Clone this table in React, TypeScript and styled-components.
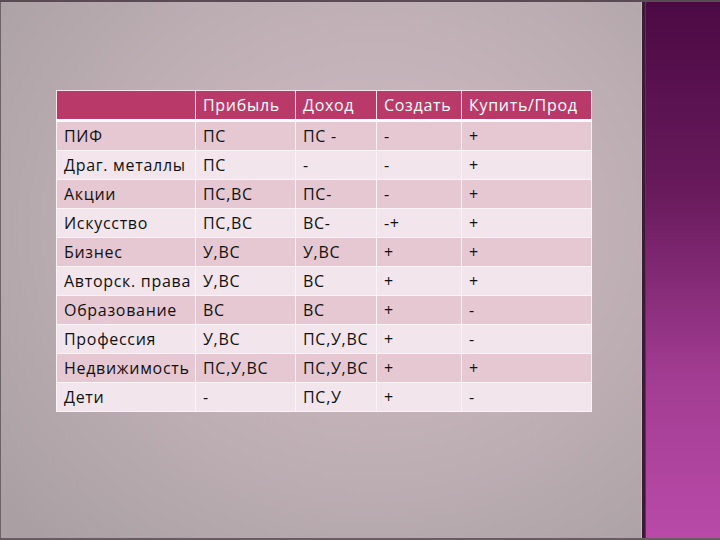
import React from 'react';
import styled, { createGlobalStyle } from 'styled-components';

const GlobalStyle = createGlobalStyle`
  html, body {
    margin: 0;
    padding: 0;
    width: 720px;
    height: 540px;
    overflow: hidden;
  }
  body {
    font-family: 'Open Sans', 'DejaVu Sans', sans-serif;
  }
`;

const columns = ['', 'Прибыль', 'Доход', 'Создать', 'Купить/Прод'];
const widths = [139, 100, 81, 85, 130];

const rows: string[][] = [
  ['ПИФ', 'ПС', 'ПС -', '-', '+'],
  ['Драг. металлы', 'ПС', '-', '-', '+'],
  ['Акции', 'ПС,ВС', 'ПС-', '-', '+'],
  ['Искусство', 'ПС,ВС', 'ВС-', '-+', '+'],
  ['Бизнес', 'У,ВС', 'У,ВС', '+', '+'],
  ['Авторск. права', 'У,ВС', 'ВС', '+', '+'],
  ['Образование', 'ВС', 'ВС', '+', '-'],
  ['Профессия', 'У,ВС', 'ПС,У,ВС', '+', '-'],
  ['Недвижимость', 'ПС,У,ВС', 'ПС,У,ВС', '+', '+'],
  ['Дети', '-', 'ПС,У', '+', '-'],
];

const Frame = styled.div`
  display: flex;
  width: 720px;
  height: 540px;
  box-sizing: border-box;
  border-top: 2px solid #5a4a52;
  border-bottom: 2px solid #6a5a62;
`;

const Slide = styled.div`
  flex: 1;
  box-sizing: border-box;
  padding: 88px 0 0 55px;
  border-left: 1px solid #6e6468;
  background: radial-gradient(ellipse 75% 80% at 58% 42%, #cdbac1 0%, #c2b2b8 45%, #aaa0a4 100%);
`;

const Divider = styled.div`
  width: 5px;
  background: linear-gradient(to right, #c9b2c2 0 1px, #3a1c34 1px 4px, #6a2a5e 4px);
`;

const Strip = styled.div`
  width: 74px;
  background: linear-gradient(to bottom, #4c0a44 0%, #681a5c 35%, #a23c92 70%, #b94aa8 100%);
`;

const Table = styled.table`
  border-collapse: collapse;
  table-layout: fixed;
  width: 535px;
  font-size: 16px;
  letter-spacing: 0.7px;
  color: #111;
`;

const HeadCell = styled.th`
  background: #b93a69;
  color: #fff;
  font-weight: normal;
  text-align: left;
  height: 28px;
  padding: 0 0 0 7px;
  border: 1px solid #f4e4ec;
  border-bottom: 3px solid #fff;
  white-space: nowrap;
`;

const Row = styled.tr<{ $odd: boolean }>`
  background: ${p => (p.$odd ? '#e5c8d2' : '#f2e5eb')};
`;

const Cell = styled.td`
  height: 28px;
  padding: 0 0 0 7px;
  border: 1px solid #fbf4f7;
  white-space: nowrap;
  text-align: left;
`;

export default function App() {
  return (
    <>
      <GlobalStyle />
      <Frame>
        <Slide>
          <Table>
            <colgroup>
              {widths.map((w, i) => (
                <col key={i} style={{ width: w }} />
              ))}
            </colgroup>
            <thead>
              <tr>
                {columns.map((c, i) => (
                  <HeadCell key={i}>{c}</HeadCell>
                ))}
              </tr>
            </thead>
            <tbody>
              {rows.map((r, i) => (
                <Row key={i} $odd={i % 2 === 0}>
                  {r.map((c, j) => (
                    <Cell key={j}>{c}</Cell>
                  ))}
                </Row>
              ))}
            </tbody>
          </Table>
        </Slide>
        <Divider />
        <Strip />
      </Frame>
    </>
  );
}
